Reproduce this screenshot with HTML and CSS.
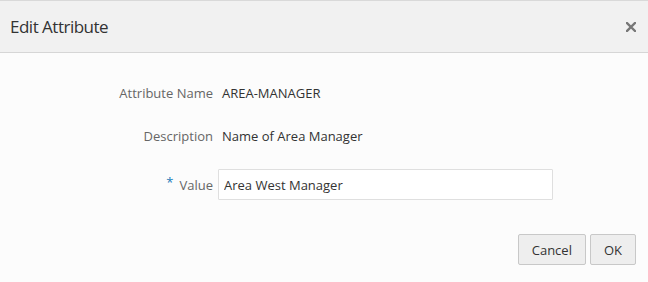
FILE: index.html
```html
<!DOCTYPE html>
<html>
<head>
<meta charset="utf-8">
<link rel="stylesheet" href="styles.css">
</head>
<body>
<div class="dialog">
  <div class="header">
    <h1 class="title">Edit Attribute</h1>
    <button class="close" aria-label="Close">
      <svg width="10" height="10" viewBox="0 0 10 10"><path d="M1 1L9 9M9 1L1 9" stroke="#777" stroke-width="2.4" stroke-linecap="square"/></svg>
    </button>
  </div>
  <div class="body">
    <div class="form">
      <div class="label">Attribute Name</div>
      <div class="value">AREA-MANAGER</div>
      <div class="label">Description</div>
      <div class="value">Name of Area Manager</div>
      <div class="label"><span class="req">*</span>Value</div>
      <div class="field"><input class="input" type="text" value="Area West Manager"></div>
    </div>
    <div class="footer">
      <button class="btn">Cancel</button>
      <button class="btn">OK</button>
    </div>
  </div>
</div>
</body>
</html>
```
FILE: styles.css
```css
html, body {
  margin: 0;
  padding: 0;
  background: #fcfcfc;
}
body {
  font-family: "Open Sans", "Noto Sans", sans-serif;
  color: #333;
  width: 648px;
  height: 282px;
  overflow: hidden;
}
.dialog {
  display: flex;
  flex-direction: column;
  height: 282px;
}
.header {
  display: flex;
  align-items: center;
  justify-content: space-between;
  height: 51px;
  background: #f1f1f1;
  border-top: 1px solid #d9d9d9;
  border-bottom: 1px solid #d6d6d6;
  padding: 0 12px 0 10px;
}
.title {
  margin: 0;
  font-size: 17px;
  letter-spacing: -0.5px;
  font-weight: 400;
  color: #333;
}
.close {
  border: 0;
  background: transparent;
  padding: 0;
  width: 10px;
  height: 10px;
  display: flex;
}
.body {
  padding: 30px 12px 0 0;
  display: flex;
  flex-direction: column;
}
.form {
  display: grid;
  grid-template-columns: 213px 335px;
  grid-template-rows: 20px 20px 31px;
  row-gap: 23px;
  column-gap: 5px;
  font-size: 13px;
}
.label {
  display: flex;
  align-items: center;
  justify-content: flex-end;
  color: #666;
}
.req {
  color: #1a7bb9;
  margin-right: 6px;
  position: relative;
  top: -3px;
}
.value {
  display: flex;
  align-items: center;
  padding-left: 4px;
  color: #333;
}
.field {
  display: flex;
}
.input {
  width: 100%;
  height: 31px;
  box-sizing: border-box;
  border: 1px solid #dfdfdf;
  background: #fff;
  padding: 0 5px;
  font-family: inherit;
  font-size: 13px;
  color: #333;
  border-radius: 1px;
}
.footer {
  display: flex;
  justify-content: flex-end;
  gap: 4px;
  margin-top: 34px;
}
.btn {
  height: 31px;
  padding: 0 13px;
  border: 1px solid #c8c8c8;
  border-radius: 2px;
  background: #eeeeee;
  font-family: inherit;
  font-size: 13px;
  color: #333;
}
```
